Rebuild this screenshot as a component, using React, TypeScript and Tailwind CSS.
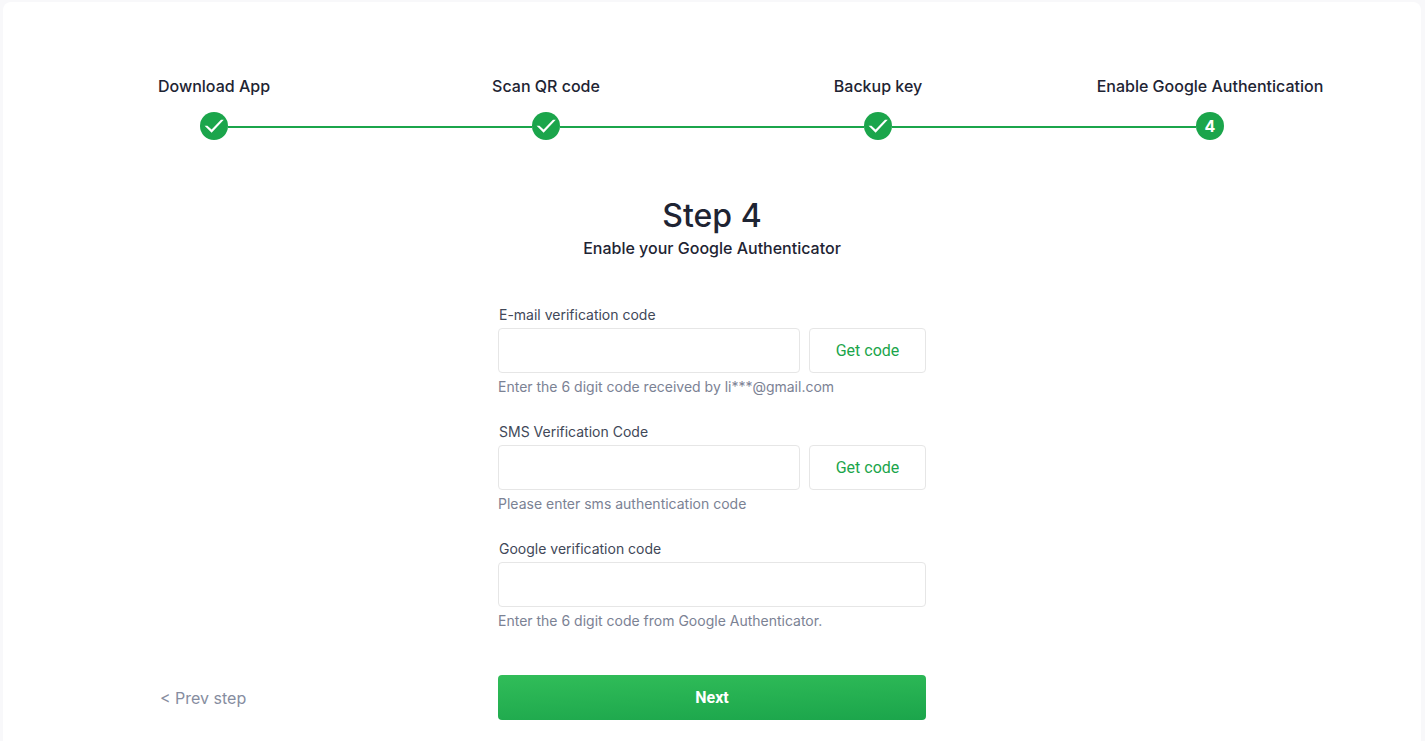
import { useState, type FC, type FormEvent } from 'react';

const steps = ['Download App', 'Scan QR code', 'Backup key', 'Enable Google Authentication'];

const CheckIcon: FC = () => (
    <svg viewBox="0 0 28 28" className="size-7" fill="none" aria-hidden="true">
        <path d="M4.6 13.8H7.4L11.6 17.5L21 7.8H23.8L11.6 20.8Z" fill="#fff" />
    </svg>
);

const Stepper: FC = () => (
    <ol className="grid grid-cols-4">
        {steps.map((step, index) => (
            <li key={step} className="flex flex-col items-center gap-3.5">
                <span className="text-base font-medium whitespace-nowrap">{step}</span>
                <div className="flex w-full items-center">
                    <span className={`mt-0.5 h-0.5 flex-1 ${index === 0 ? '' : 'bg-[#1ba54b]'}`} />
                    <span className="flex size-7 items-center justify-center rounded-full bg-[#1ba54b] text-base font-bold text-white">
                        {index < steps.length - 1 ? <CheckIcon /> : index + 1}
                    </span>
                    <span className={`mt-0.5 h-0.5 flex-1 ${index === steps.length - 1 ? '' : 'bg-[#1ba54b]'}`} />
                </div>
            </li>
        ))}
    </ol>
);

interface CodeFieldProps {
    id: string;
    label: string;
    hint: string;
    withButton?: boolean;
}

const CodeField: FC<CodeFieldProps> = ({ id, label, hint, withButton }) => {
    const [code, setCode] = useState('');

    return (
        <div className="flex flex-col">
            <label htmlFor={id} className="mb-[3px] pl-px text-sm text-[#414858]">
                {label}
            </label>
            <div className="flex gap-[9px]">
                <input
                    id={id}
                    type="text"
                    autoComplete="off"
                    value={code}
                    onChange={(e) => setCode(e.target.value)}
                    aria-describedby={`${id}-hint`}
                    className="h-[45px] min-w-0 flex-1 rounded border border-[#e6e6e6] px-3 outline-none focus:border-[#1ba54b]"
                />
                {withButton && (
                    <button
                        type="button"
                        className="h-[45px] w-[117px] cursor-pointer rounded border border-[#e6e6e6] font-[Roboto,sans-serif] text-base text-[#1ba54b]"
                    >
                        Get code
                    </button>
                )}
            </div>
            <p id={`${id}-hint`} className="mt-1 text-sm text-[#7b8294]">
                {hint}
            </p>
        </div>
    );
};

const App: FC = () => {
    const handleSubmit = (e: FormEvent) => e.preventDefault();

    return (
        <div className="min-h-screen bg-[#f8f8fa] pt-0.5 pr-1 pl-[3px] font-[Inter,sans-serif] text-[#1e2433]">
            <main className="min-h-[calc(100vh-2px)] rounded-t-lg bg-white px-[45px] pt-[72px] pb-5">
                <Stepper />

                <div className="mt-14 text-center">
                    <h1 className="text-[32px] leading-10 font-medium">Step 4</h1>
                    <p className="text-base font-medium">Enable your Google Authenticator</p>
                </div>

                <form onSubmit={handleSubmit} className="mt-[45px]">
                    <div className="mx-auto flex w-full max-w-[428px] flex-col gap-[25px]">
                        <CodeField
                            id="email-code"
                            label="E-mail verification code"
                            hint="Enter the 6 digit code received by li***@gmail.com"
                            withButton
                        />
                        <CodeField
                            id="sms-code"
                            label="SMS Verification Code"
                            hint="Please enter sms authentication code"
                            withButton
                        />
                        <CodeField
                            id="google-code"
                            label="Google verification code"
                            hint="Enter the 6 digit code from Google Authenticator."
                        />
                    </div>

                    <div className="mt-11 grid grid-cols-[1fr_428px_1fr] items-center">
                        <a href="#backup-key" className="pl-28 text-base text-[#868da0]">
                            &lt; Prev step
                        </a>
                        <button
                            type="submit"
                            className="h-[45px] cursor-pointer rounded bg-[linear-gradient(178deg,#31bd59,#1ba54b)] font-[Roboto,sans-serif] text-base font-bold text-white"
                        >
                            Next
                        </button>
                    </div>
                </form>
            </main>
        </div>
    );
};

export default App;
